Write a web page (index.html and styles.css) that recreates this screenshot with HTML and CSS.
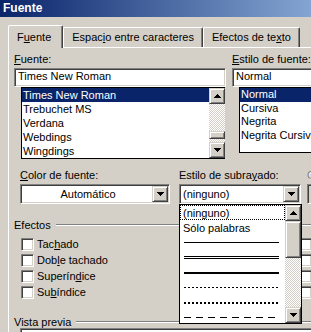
FILE: index.html
```html
<!DOCTYPE html>
<html lang="es">
<head>
  <meta charset="UTF-8" />
  <title>Fuente</title>
  <link rel="stylesheet" href="styles.css">
</head>
<body>

  <div class="window">
    <div class="titlebar">Fuente</div>

    <div class="tabs">
      <div class="tab active">F<u>u</u>ente</div>
      <div class="tab">Espac<u>i</u>o entre caracteres</div>
      <div class="tab">Efectos de te<u>x</u>to</div>
    </div>

    <div class="panel">
      <div class="fontrow">
        <div class="col name">
          <div class="label"><u>F</u>uente:</div>
          <div class="edit">Times New Roman</div>
          <div class="list">
            <div class="items">
              <div class="item sel">Times New Roman</div>
              <div class="item">Trebuchet MS</div>
              <div class="item">Verdana</div>
              <div class="item">Webdings</div>
              <div class="item">Wingdings</div>
            </div>
            <div class="vscroll">
              <div class="sbtn"><svg width="7" height="4"><path d="M3 0h1v1H3zM2 1h3v1H2zM1 2h5v1H1zM0 3h7v1H0z"/></svg></div>
              <div class="track"><div class="thumb small"></div></div>
              <div class="sbtn"><svg width="7" height="4"><path d="M0 0h7v1H0zM1 1h5v1H1zM2 2h3v1H2zM3 3h1v1H3z"/></svg></div>
            </div>
          </div>
        </div>

        <div class="col style">
          <div class="label"><u>E</u>stilo de fuente:</div>
          <div class="edit">Normal</div>
          <div class="list short">
            <div class="items">
              <div class="item sel">Normal</div>
              <div class="item">Cursiva</div>
              <div class="item">Negrita</div>
              <div class="item">Negrita Cursiva</div>
            </div>
          </div>
        </div>
      </div>

      <div class="comborow">
        <div class="field fcolor">
          <div class="label"><u>C</u>olor de fuente:</div>
          <div class="combo center">
            <span class="value">Automático</span>
            <div class="cbtn"><svg width="7" height="4"><path d="M0 0h7v1H0zM1 1h5v1H1zM2 2h3v1H2zM3 3h1v1H3z"/></svg></div>
          </div>
        </div>

        <div class="field uline">
          <div class="label">Estilo de subra<u>y</u>ado:</div>
          <div class="combo">
            <span class="value">(ninguno)</span>
            <div class="cbtn"><svg width="7" height="4"><path d="M0 0h7v1H0zM1 1h5v1H1zM2 2h3v1H2zM3 3h1v1H3z"/></svg></div>
            <div class="dropdown">
              <div class="items">
                <div class="ditem focus">(ninguno)</div>
                <div class="ditem">Sólo palabras</div>
                <div class="ditem"><span class="sample solid"></span></div>
                <div class="ditem"><span class="sample double"></span></div>
                <div class="ditem"><span class="sample thick"></span></div>
                <div class="ditem"><span class="sample dotted"></span></div>
                <div class="ditem"><span class="sample dotted-thick"></span></div>
                <div class="ditem"><span class="sample dashed"></span></div>
              </div>
              <div class="vscroll">
                <div class="sbtn"><svg width="7" height="4"><path d="M3 0h1v1H3zM2 1h3v1H2zM1 2h5v1H1zM0 3h7v1H0z"/></svg></div>
                <div class="track"><div class="thumb big"></div></div>
                <div class="sbtn"><svg width="7" height="4"><path d="M0 0h7v1H0zM1 1h5v1H1zM2 2h3v1H2zM3 3h1v1H3z"/></svg></div>
              </div>
            </div>
          </div>
        </div>

        <div class="field ucolor">
          <div class="label disabled">Color de subrayado:</div>
          <div class="combo off"></div>
        </div>
      </div>

      <div class="group">
        <span>Efectos</span>
        <div class="etch"></div>
      </div>

      <div class="effects">
        <div class="checks">
          <div class="check"><span class="box"></span><span>Tac<u>h</u>ado</span></div>
          <div class="check"><span class="box"></span><span>Dob<u>l</u>e tachado</span></div>
          <div class="check"><span class="box"></span><span>Superín<u>d</u>ice</span></div>
          <div class="check"><span class="box"></span><span>Su<u>b</u>índice</span></div>
        </div>
        <div class="checks second">
          <div class="check"><span class="box"></span><span>Sombra</span></div>
          <div class="check"><span class="box"></span><span>Contorno</span></div>
          <div class="check"><span class="box"></span><span>Relieve</span></div>
          <div class="check"><span class="box"></span><span>Grabado</span></div>
        </div>
      </div>

      <div class="group preview-head">
        <span>Vista previa</span>
        <div class="etch"></div>
      </div>
      <div class="preview"></div>
    </div>
  </div>

</body>
</html>
```

FILE: styles.css
```css
body {
  margin: 0;
  background-color: #d4d0c8;
  color: #000;
  font-family: "Liberation Sans", Arial, sans-serif;
  font-size: 11px;
  overflow: hidden;
}

.window {
  width: 400px;
}

.titlebar {
  height: 17px;
  padding-left: 3px;
  background: linear-gradient(to right, #0a246a, #a6caf0);
  color: #fff;
  font-weight: bold;
  font-size: 12px;
  line-height: 17px;
}

/* tabs */

.tabs {
  display: flex;
  align-items: flex-end;
  height: 22px;
  margin-top: 8px;
  padding-left: 8px;
}

.tab {
  flex: none;
  height: 20px;
  padding: 0 8px;
  box-sizing: border-box;
  line-height: 19px;
  border-top: 1px solid #fff;
  border-left: 1px solid #fff;
  border-right: 1px solid #404040;
  border-radius: 2px 2px 0 0;
  box-shadow: inset -1px 0 #808080;
}

.tab.active {
  position: relative;
  z-index: 1;
  height: 23px;
  margin-bottom: -1px;
  padding: 0 11px 0 8px;
  line-height: 22px;
  background-color: #d4d0c8;
}

.panel {
  margin-left: 8px;
  height: 320px;
  padding: 5px 0 0 5px;
  border-top: 1px solid #fff;
  border-left: 1px solid #fff;
}

.label {
  height: 13px;
  line-height: 13px;
  margin-bottom: 2px;
  white-space: nowrap;
}

.label.disabled {
  color: #808080;
  text-shadow: 1px 1px #fff;
}

/* font and style lists */

.fontrow {
  display: flex;
  gap: 6px;
}

.col {
  flex: none;
}

.col.name {
  width: 212px;
}

.col.style {
  width: 130px;
}

.edit {
  height: 19px;
  box-sizing: border-box;
  padding-left: 3px;
  line-height: 15px;
  background-color: #fff;
  border: 1px solid;
  border-color: #808080 #fff #fff #808080;
  box-shadow: inset 1px 1px #404040, inset -1px -1px #d4d0c8;
  white-space: nowrap;
}

.list {
  display: flex;
  margin-left: 7px;
  width: 204px;
  height: 72px;
  box-sizing: border-box;
  background-color: #fff;
  border: 1px solid #000;
  border-right: none;
}

.list.short {
  width: auto;
  height: 66px;
}

.items {
  flex: 1;
  overflow: hidden;
  white-space: nowrap;
}

.item {
  height: 14px;
  line-height: 14px;
  padding-left: 1px;
}

.list.short .item {
  height: 13.5px;
  line-height: 13px;
}

.item.sel {
  background-color: #0a246a;
  color: #fff;
}

/* scrollbars */

.vscroll {
  display: flex;
  flex-direction: column;
  width: 16px;
}

.sbtn,
.thumb,
.cbtn {
  box-sizing: border-box;
  background-color: #d4d0c8;
  border: 1px solid;
  border-color: #d4d0c8 #404040 #404040 #d4d0c8;
  box-shadow: inset 1px 1px #fff, inset -1px -1px #808080;
}

.sbtn {
  display: flex;
  align-items: center;
  justify-content: center;
  height: 16px;
}

.track {
  flex: 1;
  background: repeating-conic-gradient(#fff 0 25%, #d4d0c8 0 50%) 0 0 / 2px 2px;
}

.thumb.small {
  height: 8px;
  margin-top: 27px;
}

.thumb.big {
  height: 37px;
}

/* combos */

.comborow {
  display: flex;
  margin-top: 10px;
}

.field {
  flex: none;
}

.field.fcolor {
  width: 150px;
  margin-left: 6px;
}

.field.uline {
  width: 122px;
  margin-left: 9px;
}

.field.ucolor {
  width: 120px;
  margin-left: 6px;
}

.combo {
  position: relative;
  display: flex;
  height: 20px;
  box-sizing: border-box;
  padding: 2px;
  background-color: #fff;
  border: 1px solid;
  border-color: #808080 #fff #fff #808080;
  box-shadow: inset 1px 1px #404040, inset -1px -1px #d4d0c8;
}

.combo .value {
  flex: 1;
  line-height: 14px;
  padding-left: 1px;
}

.combo.center .value {
  text-align: center;
}

.combo.off {
  background-color: #d4d0c8;
}

.cbtn {
  display: flex;
  align-items: center;
  justify-content: center;
  width: 16px;
  margin: -1px -1px -1px 0;
}

.dropdown {
  position: absolute;
  top: 19px;
  left: -1px;
  z-index: 2;
  display: flex;
  width: 123px;
  height: 120px;
  box-sizing: border-box;
  background-color: #fff;
  border: 1px solid #000;
}

.ditem {
  display: flex;
  align-items: center;
  height: 15px;
  box-sizing: border-box;
  padding-left: 3px;
}

.ditem.focus {
  border: 1px dotted #000;
  padding-left: 2px;
}

.sample {
  width: 95px;
  margin-left: 1px;
}

.sample.solid {
  height: 1px;
  background-color: #000;
}

.sample.double {
  height: 3px;
  border-top: 1px solid #000;
  border-bottom: 1px solid #000;
  box-sizing: border-box;
}

.sample.thick {
  height: 2px;
  background-color: #000;
}

.sample.dotted {
  height: 1px;
  background: repeating-linear-gradient(to right, #000 0 2px, transparent 2px 4px);
}

.sample.dotted-thick {
  height: 2px;
  background: repeating-linear-gradient(to right, #000 0 2px, transparent 2px 4px);
}

.sample.dashed {
  height: 1px;
  background: repeating-linear-gradient(to right, #000 0 7px, transparent 7px 12px);
}

/* effects */

.group {
  display: flex;
  align-items: center;
  gap: 5px;
  height: 13px;
  margin-top: 14px;
}

.etch {
  flex: 1;
  height: 2px;
  box-sizing: border-box;
  border-top: 1px solid #808080;
  border-bottom: 1px solid #fff;
}

.effects {
  display: flex;
  margin-top: 5px;
}

.checks {
  flex: none;
  width: 271px;
  padding-left: 7px;
}

.checks.second {
  width: 120px;
}

.check {
  display: flex;
  align-items: center;
  gap: 3px;
  height: 16px;
  white-space: nowrap;
}

.box {
  flex: none;
  width: 13px;
  height: 13px;
  box-sizing: border-box;
  background-color: #fff;
  border: 1px solid;
  border-color: #808080 #fff #fff #808080;
  box-shadow: inset 1px 1px #404040, inset -1px -1px #d4d0c8;
}

.preview-head {
  margin-top: 15px;
}

.preview {
  margin-left: 6px;
  height: 40px;
  background-color: #fff;
  border: 1px solid;
  border-color: #808080 #fff #fff #808080;
  box-shadow: inset 1px 1px #404040;
}
```
